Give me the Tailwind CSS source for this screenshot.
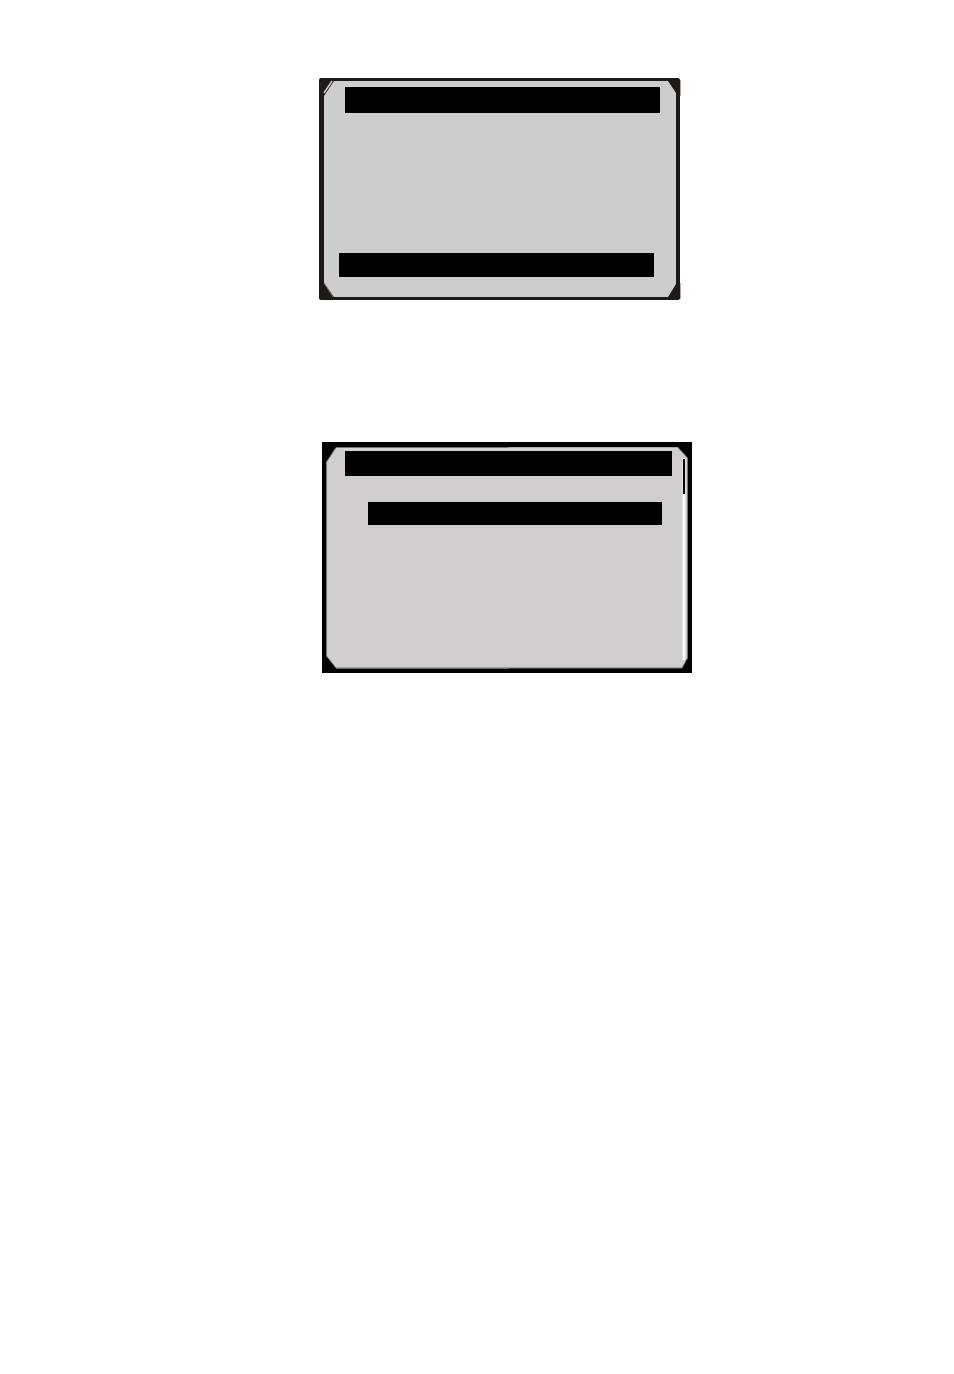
<!DOCTYPE html>
<html lang="en">
<head>
<meta charset="utf-8">
<meta name="viewport" content="width=device-width, initial-scale=1">
<title>Display screens</title>
<script src="https://cdn.jsdelivr.net/npm/@tailwindcss/browser@4"></script>
</head>
<body class="bg-white">
<main class="flex min-h-screen flex-col gap-[142px] pt-[78px] pl-[319px]">
  <section aria-label="First display" class="relative w-full max-w-[362px] pt-[9px] pr-[21px] pb-[23px] pl-5">
    <svg class="absolute inset-0 h-full w-full" viewBox="0 0 362 222" preserveAspectRatio="none" aria-hidden="true">
      <path d="M359 2h3v16h-3zM359 205h3v16h-3z" fill="#b5a9a8"/>
      <rect width="361" height="222" rx="2" fill="#1e1a19"/>
      <path d="M15 3H349L357 15V206L349 219H15L5 205V18z" fill="#cdcdcd"/>
      <path d="M5 15L13 3" fill="none" stroke="#cdcdcd" stroke-width="1.5"/>
      <path d="M5 205L14 219" fill="none" stroke="#77716c"/>
    </svg>
    <div class="relative flex flex-col gap-[140px]">
      <div class="ml-[6px] h-[26px] bg-black"></div>
      <div class="mr-[6px] h-6 bg-black"></div>
    </div>
  </section>
  <section aria-label="Second display" class="relative ml-[3px] w-full max-w-[370px] pt-[9px] pr-5 pb-[148px] pl-[23px]">
    <svg class="absolute inset-0 h-full w-full" viewBox="0 0 370 231" preserveAspectRatio="none" aria-hidden="true">
      <rect width="370" height="231" fill="#000"/>
      <path d="M14 5.500H356L365.500 16V216L360 226H14L4.500 214V20z" fill="#cfcdce" stroke="#777"/>
      <path d="M14 7H356" stroke="#d2d4d2" stroke-width="2"/>
      <path d="M186 5.500H356" stroke="#aaa"/>
      <path d="M14 226H187" stroke="#999"/>
      <rect x="360" y="16" width="1" height="202" fill="#e2e2e2"/>
      <rect x="361" y="16" width="2" height="202" fill="#fff"/>
      <rect x="363" y="16" width="1" height="202" fill="#ddd"/>
      <rect x="361" y="17" width="2" height="35" fill="#000"/>
    </svg>
    <div class="relative flex flex-col gap-[26px]">
      <div class="h-[25px] bg-black"></div>
      <div class="mr-[10px] ml-[23px] h-[23px] bg-black"></div>
    </div>
  </section>
</main>
</body>
</html>
